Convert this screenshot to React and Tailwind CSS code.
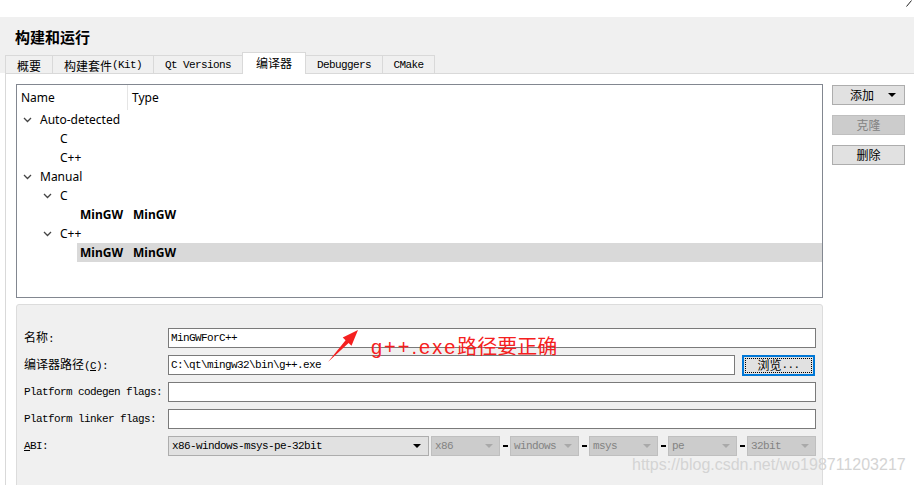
import React from 'react';

const CJK = 'font-[family-name:Noto_Sans_CJK_SC,sans-serif]';
const MONO = 'font-[family-name:Liberation_Mono,monospace] text-[11px] tracking-[-0.6px]';
const UI = 'font-[family-name:Noto_Sans,Noto_Sans_CJK_SC,sans-serif]';

const Chevron = () => (
  <svg width="9" height="6" viewBox="0 0 9 6" className="text-[#444]">
    <path d="M1 1 L4.5 4.5 L8 1" fill="none" stroke="currentColor" strokeWidth="1.3" />
  </svg>
);

const TreeRow = ({ level, expand, name, type, bold, selected }) => (
  <div className={`flex h-[19px] items-center text-[12px] ${bold ? 'font-bold' : ''}`}>
    <div className="flex w-[111px] shrink-0 items-center pl-[4px]">
      {level > 0 && <div className={level === 1 ? 'w-[20px] shrink-0' : 'w-[40px] shrink-0'} />}
      <div className="flex w-[12px] shrink-0 justify-center">{expand && <Chevron />}</div>
      <div className={`ml-[4px] flex h-[19px] flex-1 items-center pl-[3px] ${selected ? 'bg-[#d9d9d9]' : ''}`}>{name}</div>
    </div>
    <div className={`flex h-[19px] flex-1 items-center pl-[5px] ${selected ? 'bg-[#d9d9d9]' : ''}`}>{type}</div>
  </div>
);

const Input = ({ children, className = 'flex-1' }) => (
  <div className={`flex h-[20px] items-center border border-[#7a7a7a] bg-white pl-[2px] ${className} ${MONO} text-black`}>
    {children}
  </div>
);

const Disabled = ({ label }) => (
  <div className="flex h-[20px] w-[69px] shrink-0 items-center justify-between border border-[#bfbfbf] bg-[#cccccc] pl-[3px] pr-[6px]">
    <span className={`${MONO} text-[#838383]`}>{label}</span>
    <span className="h-0 w-0 border-x-[4px] border-t-[4px] border-x-transparent border-t-[#a9a9a9]" />
  </div>
);

const Dash = () => (
  <div className="flex w-[10px] shrink-0 justify-center">
    <div className="h-[1.5px] w-[5px] bg-black" />
  </div>
);

export default function App() {
  return (
    <div className={`relative flex h-[485px] w-[914px] flex-col overflow-hidden bg-white ${CJK} text-black`}>
      {/* top strip */}
      <div className="relative h-[17px] shrink-0 bg-white">
        <svg className="absolute right-[2px] top-0" width="6" height="7" viewBox="0 0 6 7">
          <path d="M0.5 6.5 L5.5 0.5" stroke="#222" strokeWidth="1" />
        </svg>
      </div>

      {/* header + tabs */}
      <div className="flex h-[56px] shrink-0 flex-col bg-[#f0f0f0]">
        <div className="flex h-[22px] items-center pl-[15px] pt-[16px] text-[15px] font-bold leading-none">构建和运行</div>
        <div className="flex flex-1 items-end pl-[5px]">
          <div className="flex h-[18px] w-[48px] items-center justify-center border border-b-0 border-[#d9d9d9] pt-[2px] text-[12px]">概要</div>
          <div className="-ml-px flex h-[18px] w-[102px] items-center justify-center border border-b-0 border-[#d9d9d9] pt-[2px] text-[12px]">
            构建套件<span className={MONO}>(Kit)</span>
          </div>
          <div className={`-ml-px flex h-[18px] w-[90px] items-center justify-center border border-b-0 border-[#d9d9d9] pt-[2px] ${MONO}`}>Qt Versions</div>
          <div className="relative z-10 -mb-px -ml-px flex h-[22px] w-[64px] items-center justify-center border border-b-0 border-[#d9d9d9] bg-white pb-[2px] text-[12px]">编译器</div>
          <div className={`-ml-px flex h-[18px] w-[78px] items-center justify-center border border-b-0 border-[#d9d9d9] pt-[2px] ${MONO}`}>Debuggers</div>
          <div className={`-ml-px flex h-[18px] w-[53px] items-center justify-center border border-b-0 border-[#d9d9d9] pt-[2px] ${MONO}`}>CMake</div>
        </div>
      </div>

      {/* tab pane */}
      <div className="ml-[5px] flex flex-1 border-l border-t border-[#d9d9d9] bg-white">
        <div className="flex w-[818px] shrink-0 flex-col pl-[10px] pt-[10px]">
          {/* tree */}
          <div className={`h-[214px] w-[807px] shrink-0 border border-[#828790] bg-white ${UI}`}>
            <div className="flex h-[25px] items-center text-[12px]">
              <div className="flex h-[25px] w-[111px] items-center border-r border-[#e5e5e5] pl-[4px]">Name</div>
              <div className="pl-[4px]">Type</div>
            </div>
            <TreeRow level={0} expand name="Auto-detected" />
            <TreeRow level={1} name="C" />
            <TreeRow level={1} name="C++" />
            <TreeRow level={0} expand name="Manual" />
            <TreeRow level={1} expand name="C" />
            <TreeRow level={2} bold name="MinGW" type="MinGW" />
            <TreeRow level={1} expand name="C++" />
            <TreeRow level={2} bold selected name="MinGW" type="MinGW" />
          </div>

          {/* form */}
          <div className="mt-[6px] flex h-[190px] w-[807px] shrink-0 flex-col gap-[7px] rounded-[3px] border border-[#dcdcdc] bg-[#f0f0f0] pl-[7px] pr-[6px] pt-[23px] text-[12px]">
            <div className="flex h-[20px] items-center">
              <div className="w-[144px] shrink-0">名称<span className={MONO}>:</span></div>
              <Input>MinGWForC++</Input>
            </div>
            <div className="flex h-[20px] items-center">
              <div className="w-[144px] shrink-0">
                编译器路径<span className={MONO}>(<span className="underline">C</span>):</span>
              </div>
              <Input>C:\qt\mingw32\bin\g++.exe</Input>
              <div className="relative ml-[7px] mr-px flex h-[21px] w-[73px] shrink-0 items-center justify-center border-2 border-[#0078d7] bg-[#e1e1e1] text-[12px]">
                浏览<span className={MONO}>...</span>
                <div className="absolute inset-[1px] border border-dotted border-black" />
              </div>
            </div>
            <div className="flex h-[20px] items-center">
              <div className={`w-[144px] shrink-0 ${MONO}`}>Platform codegen flags:</div>
              <Input />
            </div>
            <div className="flex h-[20px] items-center">
              <div className={`w-[144px] shrink-0 ${MONO}`}>Platform linker flags:</div>
              <Input />
            </div>
            <div className="flex h-[20px] items-center">
              <div className={`w-[144px] shrink-0 ${MONO}`}>
                <span className="underline">A</span>BI:
              </div>
              <div className="flex h-[20px] w-[261px] shrink-0 items-center justify-between border border-[#adadad] bg-[#e1e1e1] pl-[3px] pr-[7px]">
                <span className={MONO}>x86-windows-msys-pe-32bit</span>
                <span className="h-0 w-0 border-x-[4px] border-t-[4px] border-x-transparent border-t-black" />
              </div>
              <div className="ml-[2px] flex items-center">
                <Disabled label="x86" />
                <Dash />
                <Disabled label="windows" />
                <Dash />
                <Disabled label="msys" />
                <Dash />
                <Disabled label="pe" />
                <Dash />
                <Disabled label="32bit" />
              </div>
            </div>
          </div>
        </div>

        {/* right buttons */}
        <div className="ml-[8px] flex flex-col gap-[10px] pt-[11px] text-[12px]">
          <div className="flex h-[20px] w-[73px] items-center border border-[#adadad] bg-[#e1e1e1] pl-[17px] pr-[8px]">
            <span className="flex-1">添加</span>
            <span className="h-0 w-0 border-x-[4px] border-t-[4px] border-x-transparent border-t-black" />
          </div>
          <div className="flex h-[20px] w-[73px] items-center justify-center border border-[#bfbfbf] bg-[#cccccc] text-[#838383]">克隆</div>
          <div className="flex h-[20px] w-[73px] items-center justify-center border border-[#adadad] bg-[#e1e1e1]">删除</div>
        </div>
      </div>

      {/* annotation */}
      <svg className="absolute left-0 top-0" width="914" height="485" viewBox="0 0 914 485">
        <polygon points="358,330 342.7,337.6 345.6,340.3 328,362 348.6,343.1 351.5,345.8" fill="#f52020" />
      </svg>
      <div className="absolute left-[371px] top-[334px] text-[20px] leading-[24px] text-[#f52020]">
        <span className="font-[family-name:Liberation_Sans,sans-serif] tracking-[2px]">g++.exe</span>路径要正确
      </div>

      {/* watermark */}
      <div className="absolute left-[632px] top-[455px] font-[family-name:Liberation_Sans,sans-serif] text-[16px] leading-[20px] text-[#d4d4d4]">
        https://blog.csdn.net/wo198711203217
      </div>
    </div>
  );
}
